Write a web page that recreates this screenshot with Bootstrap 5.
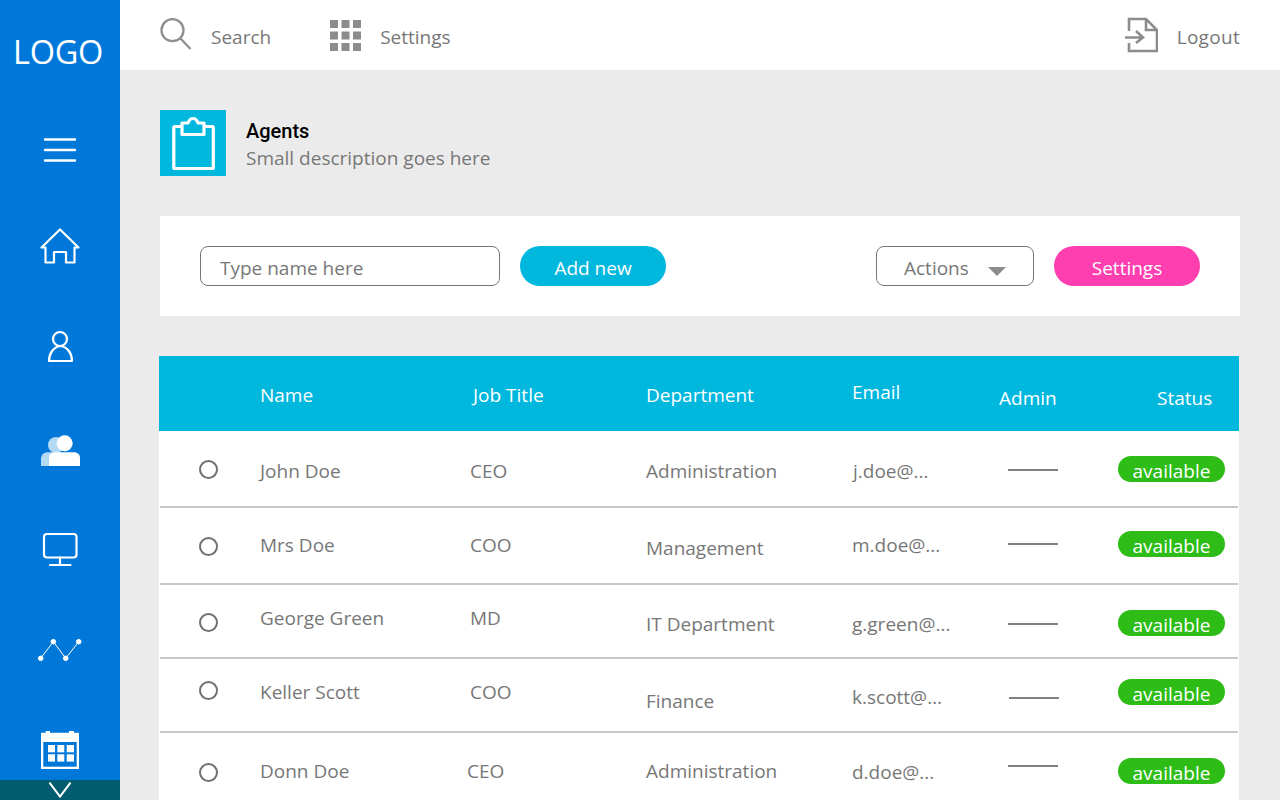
<!DOCTYPE html>
<html lang="en">
<head>
    <meta charset="UTF-8">
    <title>Agents</title>
    <link href="https://cdn.jsdelivr.net/npm/bootstrap@5.3.0/dist/css/bootstrap.min.css" rel="stylesheet">
    <style>
        html, body { height: 800px; overflow: hidden; }
        body { background: #ebebeb; font-family: "Open Sans", "Liberation Sans", sans-serif; font-size: 19px; color: #777; }
        .side-rail { width: 120px; height: 800px; background: #0078d9; position: relative; overflow: hidden; flex: none; }
        .logo-text { height: 100px; padding: 29px 4px 0 0; font-size: 32.5px; line-height: 46px; color: #fff; text-align: center; letter-spacing: -.3px; }
        .rail-item { height: 100px; }
        .rail-more { position: absolute; left: 0; right: 0; bottom: 0; height: 20px; background: #005c6e; }
        .top-strip { height: 70px; background: #fff; padding: 0 40px; }
        .strip-link { color: #777; text-decoration: none; }
        .strip-label { padding-top: 4px; }
        .search-text { margin-left: 19px; }
        .settings-link { margin-left: 59px; }
        .settings-text { margin-left: 19px; }
        .logout-text { margin-left: 19px; letter-spacing: .3px; }
        .page-area { padding: 40px 40px 0; }
        .tile { width: 66px; height: 66px; background: #00b7de; }
        .title-block { margin-left: 20px; padding-top: 4px; }
        .agents-title { font-family: Roboto, sans-serif; font-weight: 500; font-size: 20px; line-height: 27px; color: #000; margin: 0; }
        .agents-sub { line-height: 27px; margin: 0; }
        .tool-card { height: 100px; background: #fff; margin: 40px 0; padding: 0 40px; gap: 20px; }
        .name-input.form-control { width: 300px; height: 40px; border: 1px solid #777; border-radius: 8px; padding: 4px 19px 0; font-size: 19px; color: #777; background: transparent; }
        .name-input::placeholder { color: #777; }
        .pill-btn { width: 146px; height: 40px; padding: 4px 0 0; border: 0; font-size: 19px; color: #fff; }
        .pill-cyan, .pill-cyan:hover { background: #00b7de; color: #fff; }
        .pill-pink, .pill-pink:hover { background: #ff3eb0; color: #fff; }
        .actions-btn { width: 158px; height: 40px; padding: 4px 27px 0; border: 1px solid #777; border-radius: 8px; background: #fff; color: #777; font-size: 19px; }
        .actions-caret { width: 0; height: 0; border-left: 9px solid transparent; border-right: 9px solid transparent; border-top: 9px solid #8c8c8c; margin-top: 7px; }
        .agents-grid { margin: 0 1px 0 -1px; background: #fff; }
        .grid-head { height: 75px; padding-top: 4px; background: #00b7de; color: #fff; }
        .agent-row { margin: 0 1px; border-bottom: 2px solid #c8c8c8; }
        .agent-row:nth-child(2), .agent-row:nth-child(3) { height: 77px; }
        .agent-row:nth-child(4), .agent-row:nth-child(5) { height: 74px; }
        .agent-row:nth-child(6) { height: 77px; border-bottom: 0; }
        .c-pick { width: 100px; padding-left: 39px; flex: none; }
        .c-name { width: 210px; flex: none; }
        .c-job { width: 176px; flex: none; }
        .c-dept { width: 206px; flex: none; }
        .c-mail { width: 156px; flex: none; }
        .c-admin { width: 110px; flex: none; }
        .c-status { flex: none; }
        .grid-head .c-pick { width: 101px; }
        .grid-head .c-job { width: 173px; margin-left: 3px; }
        .grid-head .c-mail { width: 147px; }
        .grid-head .c-admin { width: 158px; }
        .pick-dot.form-check-input { width: 19px; height: 19px; margin: 0; display: block; border: 2px solid #707070; background: transparent; }
        .admin-dash { width: 50px; height: 2px; margin-top: 2px; background: #808080; }
        .dash-r1 { margin-left: 1px; }
        .state-pill { width: 107px; height: 26px; line-height: 31px; background: #2dbd16; color: #fff; text-align: center; }
        .n-n7 { margin-top: -14px; } .n-n5 { margin-top: -10px; } .n-n3 { margin-top: -6px; } .n-n2 { margin-top: -4px; } .n-n1 { margin-top: -2px; }
        .n-1 { margin-top: 2px; } .n-2 { margin-top: 4px; } .n-3 { margin-top: 6px; } .n-6 { margin-top: 12px; }
        .job-l3 { margin-left: -3px; width: 179px; }
        .mail-r1 { margin-left: 1px; width: 155px; }
    </style>
</head>
<body class="d-flex">
    <nav class="side-rail">
        <div class="logo-text">LOGO</div>
        <div class="rail-item d-flex align-items-center justify-content-center">
            <svg width="60" height="60" viewBox="0 0 60 60" fill="none" stroke="#fff" stroke-width="2.4" stroke-linecap="round"><path d="M15 19.5H45M15 30H45M15 40.5H45"/></svg>
        </div>
        <div class="rail-item d-flex align-items-center justify-content-center">
            <svg width="60" height="60" viewBox="0 0 60 60" fill="none" stroke="#fff" stroke-width="2.2" stroke-linejoin="round"><path d="M30 9.5L11.5 27.5H15.5V42.5H24V32H36V42.5H44.5V27.5H48.5Z"/></svg>
        </div>
        <div class="rail-item d-flex align-items-center justify-content-center">
            <svg width="60" height="60" viewBox="0 0 60 60" fill="none" stroke="#fff" stroke-width="2.2" stroke-linejoin="round"><circle cx="30" cy="19" r="7"/><path d="M19 41H42C42 34 38 27 30.5 26C23 27 19 34 19 41Z"/></svg>
        </div>
        <div class="rail-item d-flex align-items-center justify-content-center">
            <svg width="60" height="60" viewBox="0 0 60 60"><circle cx="26" cy="25" r="8" fill="#b3d9f5"/><path d="M11 46V39C11 35 14 32.3 18 32.3H30V46Z" fill="#b3d9f5"/><circle cx="34.7" cy="23.3" r="8" fill="#fff"/><path d="M19 46V38C19 34.5 21.5 32.3 25 32.3H44C47.5 32.3 50 34.5 50 38V46Z" fill="#fff"/></svg>
        </div>
        <div class="rail-item d-flex align-items-center justify-content-center">
            <svg width="60" height="60" viewBox="0 0 60 60" fill="none" stroke="#fff" stroke-width="2.2" stroke-linecap="round"><rect x="14" y="14" width="32.5" height="23.5" rx="3"/><path d="M30 37.5V45M20 45H40.5"/></svg>
        </div>
        <div class="rail-item d-flex align-items-center justify-content-center">
            <svg width="60" height="60" viewBox="0 0 60 60" fill="#fff" stroke="#fff"><path d="M10.7 38.3L23.3 21.7L35.7 38.3L48.7 21.7" fill="none" stroke-width="1"/><circle cx="10.7" cy="38.3" r="2.3"/><circle cx="23.3" cy="21.7" r="2.3"/><circle cx="35.7" cy="38.3" r="2.3"/><circle cx="48.7" cy="21.7" r="2.3"/></svg>
        </div>
        <div class="rail-item d-flex align-items-center justify-content-center">
            <svg width="60" height="60" viewBox="0 0 60 60"><path d="M11 49V12.7H15.7V11H20V12.7H39V11H44V12.7H49V49Z" fill="#fff"/><rect x="13.3" y="22" width="33.4" height="24.7" fill="#0078d9"/><g fill="#fff"><rect x="18" y="25" width="7" height="7.3"/><rect x="27.3" y="25" width="7" height="7.3"/><rect x="36.7" y="25" width="7.3" height="7.3"/><rect x="18" y="34.3" width="7" height="7.3"/><rect x="27.3" y="34.3" width="7" height="7.3"/><rect x="36.7" y="34.3" width="7.3" height="7.3"/></g></svg>
        </div>
        <div class="rail-more d-flex justify-content-center">
            <svg width="24" height="20" viewBox="0 0 24 20" fill="none" stroke="#fff" stroke-width="2"><path d="M1.5 2.7L12 16.5L22.5 2.7"/></svg>
        </div>
    </nav>

    <div class="flex-grow-1">
        <header class="top-strip d-flex align-items-center">
            <a class="strip-link d-flex align-items-center" href="#">
                <svg width="32" height="34" viewBox="0 0 32 34" fill="none" stroke="#8f8f8f" stroke-width="2.3"><circle cx="12.5" cy="12.2" r="11"/><path d="M20.5 20.5L30.5 31"/></svg>
                <span class="strip-label search-text">Search</span>
            </a>
            <a class="strip-link d-flex align-items-center settings-link" href="#">
                <svg width="31" height="31" viewBox="0 0 31 31" fill="#8c8c8c"><rect width="8" height="8"/><rect x="11.5" width="8" height="8"/><rect x="23" width="8" height="8"/><rect y="11.5" width="8" height="8"/><rect x="11.5" y="11.5" width="8" height="8"/><rect x="23" y="11.5" width="8" height="8"/><rect y="23" width="8" height="8"/><rect x="11.5" y="23" width="8" height="8"/><rect x="23" y="23" width="8" height="8"/></svg>
                <span class="strip-label settings-text">Settings</span>
            </a>
            <a class="strip-link d-flex align-items-center ms-auto" href="#">
                <svg width="33" height="36" viewBox="0 0 33 36" fill="none" stroke="#8c8c8c" stroke-width="2.6"><path d="M4 14V2H21L32 13V34H4V26"/><path d="M21 2V13H32"/><path d="M0 20.5H17M11 14L18 20.5L11 26"/></svg>
                <span class="strip-label logout-text">Logout</span>
            </a>
        </header>

        <main class="page-area">
            <section class="d-flex align-items-center">
                <div class="tile">
                    <svg width="66" height="66" viewBox="0 0 66 66" fill="none" stroke="#fff" stroke-width="3.2" stroke-linejoin="round"><rect x="13.8" y="16.5" width="39.5" height="42" rx="1"/><path d="M22 24.500V13H28C29 10 31 8.500 33 8.500C35 8.500 37 10 38 13H44V24.500Z" fill="#00b7de"/></svg>
                </div>
                <div class="title-block">
                    <h1 class="agents-title">Agents</h1>
                    <p class="agents-sub">Small description goes here</p>
                </div>
            </section>

            <section class="tool-card d-flex align-items-center">
                <input class="form-control name-input" type="text" placeholder="Type name here">
                <button class="btn rounded-pill pill-btn pill-cyan" type="button">Add new</button>
                <button class="actions-btn d-flex align-items-center justify-content-between ms-auto" type="button">Actions <span class="actions-caret"></span></button>
                <button class="btn rounded-pill pill-btn pill-pink" type="button">Settings</button>
            </section>

            <section class="agents-grid">
                <div class="grid-head d-flex align-items-center">
                    <div class="c-pick"></div>
                    <div class="c-name">Name</div>
                    <div class="c-job">Job Title</div>
                    <div class="c-dept">Department</div>
                    <div class="c-mail n-n3">Email</div>
                    <div class="c-admin n-3">Admin</div>
                    <div class="c-status n-3">Status</div>
                </div>
                <div class="agent-row d-flex align-items-center">
                    <div class="c-pick n-1"><input class="form-check-input pick-dot" type="radio" name="agent"></div>
                    <div class="c-name n-3">John Doe</div>
                    <div class="c-job n-3">CEO</div>
                    <div class="c-dept n-3">Administration</div>
                    <div class="c-mail mail-r1 n-3">j.doe@...</div>
                    <div class="c-admin"><div class="admin-dash"></div></div>
                    <div class="c-status"><div class="state-pill rounded-pill">available</div></div>
                </div>
                <div class="agent-row d-flex align-items-center">
                    <div class="c-pick n-1"><input class="form-check-input pick-dot" type="radio" name="agent"></div>
                    <div class="c-name">Mrs Doe</div>
                    <div class="c-job">COO</div>
                    <div class="c-dept n-3">Management</div>
                    <div class="c-mail">m.doe@...</div>
                    <div class="c-admin n-n3"><div class="admin-dash"></div></div>
                    <div class="c-status n-n2"><div class="state-pill rounded-pill">available</div></div>
                </div>
                <div class="agent-row d-flex align-items-center">
                    <div class="c-pick n-1"><input class="form-check-input pick-dot" type="radio" name="agent"></div>
                    <div class="c-name n-n3">George Green</div>
                    <div class="c-job n-n3">MD</div>
                    <div class="c-dept n-3">IT Department</div>
                    <div class="c-mail n-3">g.green@...</div>
                    <div class="c-admin n-2"><div class="admin-dash"></div></div>
                    <div class="c-status n-2"><div class="state-pill rounded-pill">available</div></div>
                </div>
                <div class="agent-row d-flex align-items-center">
                    <div class="c-pick n-n5"><input class="form-check-input pick-dot" type="radio" name="agent"></div>
                    <div class="c-name n-n3">Keller Scott</div>
                    <div class="c-job n-n3">COO</div>
                    <div class="c-dept n-6">Finance</div>
                    <div class="c-mail n-2">k.scott@...</div>
                    <div class="c-admin n-2"><div class="admin-dash dash-r1"></div></div>
                    <div class="c-status n-n3"><div class="state-pill rounded-pill">available</div></div>
                </div>
                <div class="agent-row d-flex align-items-center">
                    <div class="c-pick n-1"><input class="form-check-input pick-dot" type="radio" name="agent"></div>
                    <div class="c-name">Donn Doe</div>
                    <div class="c-job job-l3">CEO</div>
                    <div class="c-dept">Administration</div>
                    <div class="c-mail n-1">d.doe@...</div>
                    <div class="c-admin n-n7"><div class="admin-dash"></div></div>
                    <div class="c-status n-n1"><div class="state-pill rounded-pill">available</div></div>
                </div>
            </section>
        </main>
    </div>
    <script src="https://cdn.jsdelivr.net/npm/bootstrap@5.3.0/dist/js/bootstrap.bundle.min.js"></script>
</body>
</html>
